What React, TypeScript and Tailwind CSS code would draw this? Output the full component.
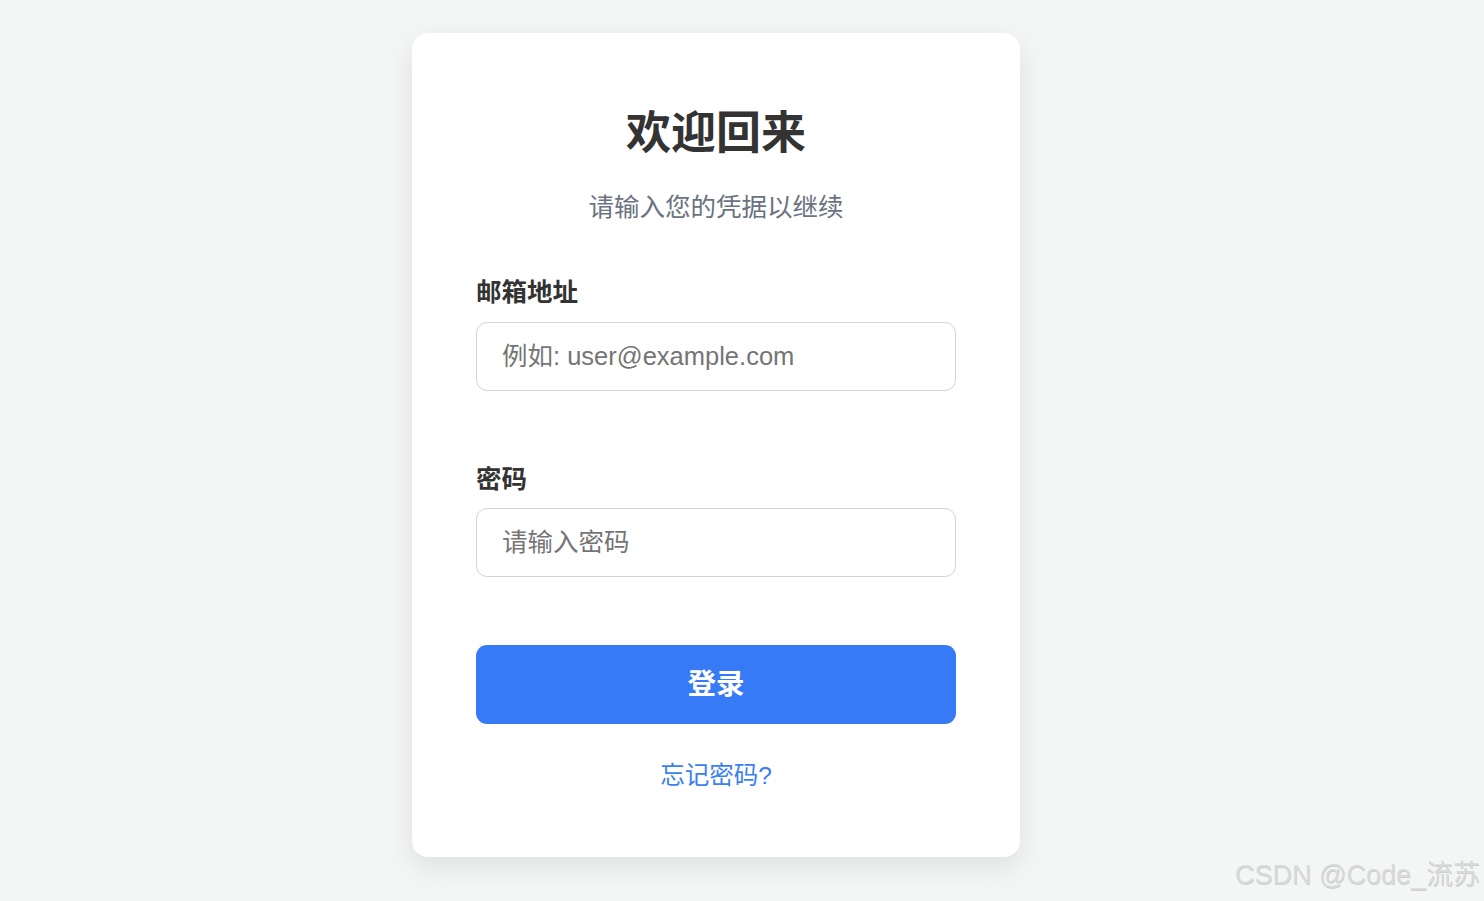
import React from "react";

export default function App() {
  return (
    <div
      className="relative min-h-[901px] w-full bg-[#f4f6f6] flex justify-center items-start pt-[33px] pr-[52px]"
      style={{ fontFamily: '"Liberation Sans", "Noto Sans CJK SC", sans-serif' }}
    >
      <div className="w-[608px] bg-white rounded-[16px] shadow-[0_10px_28px_rgba(0,0,0,0.09)] px-[64px] pt-[74px] pb-[63px] flex flex-col">
        <h1 className="text-center text-[45px] leading-[54px] font-bold text-[#333333]">欢迎回来</h1>
        <p className="mt-[28px] text-center text-[25.5px] leading-[36px] text-[#6b7280]">请输入您的凭据以继续</p>

        <label className="mt-[52px] text-[25.5px] leading-[30px] font-bold text-[#333333]">邮箱地址</label>
        <input
          type="email"
          placeholder="例如: user@example.com"
          className="mt-[15px] h-[69px] w-full rounded-[11px] border border-[#d1d5db] px-[25px] text-[25.5px] text-[#333] placeholder:text-[#757575] outline-none"
        />

        <label className="mt-[73px] text-[25.5px] leading-[30px] font-bold text-[#333333]">密码</label>
        <input
          type="password"
          placeholder="请输入密码"
          className="mt-[14px] h-[69px] w-full rounded-[11px] border border-[#d1d5db] px-[25px] text-[25.5px] text-[#333] placeholder:text-[#757575] outline-none"
        />

        <button className="mt-[68px] h-[79px] w-full rounded-[11px] bg-[#377af5] text-white text-[28.5px] font-bold">
          登录
        </button>

        <a className="mt-[34px] text-center text-[24.5px] leading-[36px] text-[#3b7ff2] cursor-pointer">忘记密码?</a>
      </div>

      <div className="absolute right-[4px] bottom-[10px] text-[27px] leading-[32px] text-[#d8dada] [text-shadow:0.5px_0.5px_0.5px_rgba(0,0,0,0.18)]">
        CSDN @Code_流苏
      </div>
    </div>
  );
}
